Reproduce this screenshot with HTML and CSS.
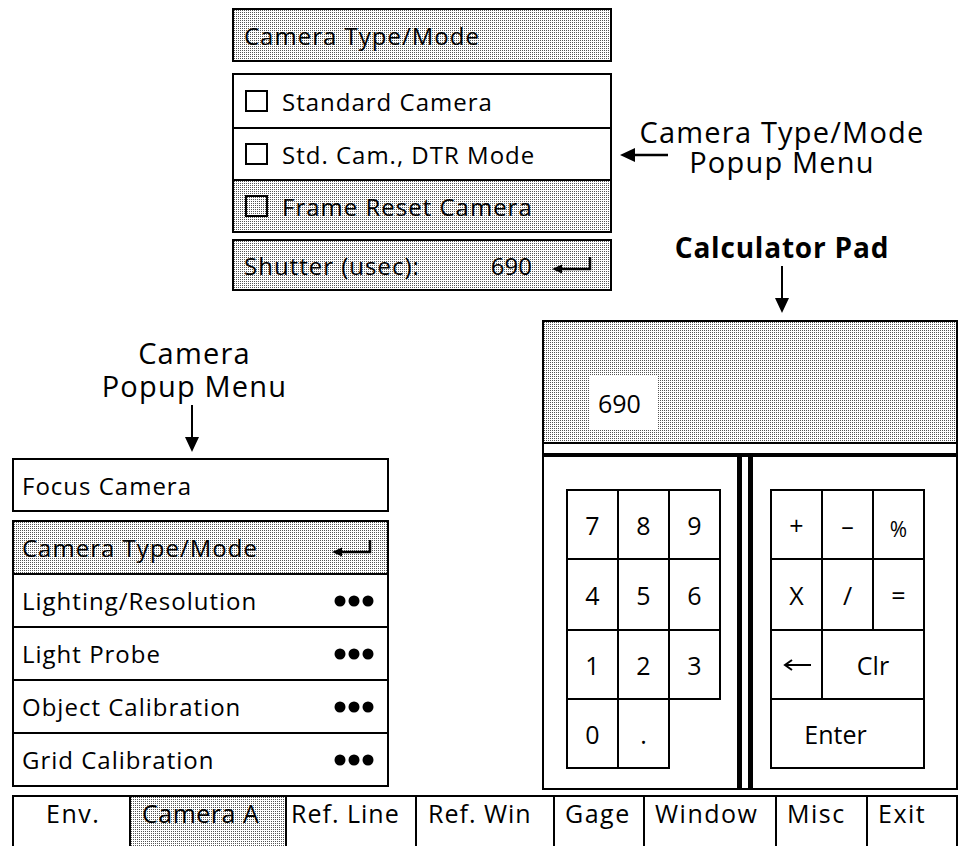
FILE: index.html
```html
<!DOCTYPE html>
<html lang="en">
<head>
    <meta charset="UTF-8">
    <title>Camera Popup Menus and Calculator Pad</title>
    <link rel="stylesheet" href="styles.css">
</head>
<body>
<div class="screen">
    <div class="top">
        <div class="type-popup">
            <div class="box shade title">Camera Type/Mode</div>
            <div class="box list">
                <div class="row check-row"><span class="check"></span>Standard Camera</div>
                <div class="row check-row"><span class="check"></span>Std. Cam., DTR Mode</div>
                <div class="row check-row shade"><span class="check shade"></span>Frame Reset Camera</div>
            </div>
            <div class="box shade shutter">
                <span class="name">Shutter (usec):</span>
                <span class="value">690</span>
                <svg class="enter-mark" width="42" height="18" viewBox="0 0 42 18"><polygon points="0,13 10,8.5 10,17.5"/><path d="M8 13 H38 V1" fill="none" stroke="#000" stroke-width="2.5"/></svg>
            </div>
        </div>
        <div class="callouts">
            <div class="type-callout">
                <svg class="arrow-left" width="48" height="16" viewBox="0 0 48 16"><line x1="12" y1="8" x2="48" y2="8" stroke="#000" stroke-width="2.5"/><polygon points="0,8 15,1 15,15"/></svg>
                <div class="label">
                    <div class="line">Camera Type/Mode</div>
                    <div class="line">Popup Menu</div>
                </div>
            </div>
            <div class="calc-callout">
                <div class="label bold"><div class="line">Calculator Pad</div></div>
                <svg class="arrow-down" width="16" height="47" viewBox="0 0 16 47"><line x1="8" y1="0" x2="8" y2="34" stroke="#000" stroke-width="2"/><polygon points="1,32 15,32 8,47"/></svg>
            </div>
        </div>
    </div>

    <div class="middle">
        <div class="left">
            <div class="label">
                <div class="line">Camera</div>
                <div class="line">Popup Menu</div>
            </div>
            <svg class="arrow-down camera-arrow" width="16" height="47" viewBox="0 0 16 47"><line x1="8" y1="0" x2="8" y2="34" stroke="#000" stroke-width="2"/><polygon points="1,32 15,32 8,47"/></svg>
            <div class="box row focus">Focus Camera</div>
            <div class="box list menu">
                <div class="row shade">Camera Type/Mode
                    <svg width="42" height="18" viewBox="0 0 42 18"><polygon points="0,13 10,8.5 10,17.5"/><path d="M8 13 H38 V1" fill="none" stroke="#000" stroke-width="2.5"/></svg>
                </div>
                <div class="row">Lighting/Resolution
                    <svg width="40" height="12" viewBox="0 0 40 12"><circle cx="6" cy="6" r="5.5"/><circle cx="20" cy="6" r="5.5"/><circle cx="34" cy="6" r="5.5"/></svg>
                </div>
                <div class="row">Light Probe
                    <svg width="40" height="12" viewBox="0 0 40 12"><circle cx="6" cy="6" r="5.5"/><circle cx="20" cy="6" r="5.5"/><circle cx="34" cy="6" r="5.5"/></svg>
                </div>
                <div class="row">Object Calibration
                    <svg width="40" height="12" viewBox="0 0 40 12"><circle cx="6" cy="6" r="5.5"/><circle cx="20" cy="6" r="5.5"/><circle cx="34" cy="6" r="5.5"/></svg>
                </div>
                <div class="row">Grid Calibration
                    <svg width="40" height="12" viewBox="0 0 40 12"><circle cx="6" cy="6" r="5.5"/><circle cx="20" cy="6" r="5.5"/><circle cx="34" cy="6" r="5.5"/></svg>
                </div>
            </div>
        </div>

        <div class="box calc">
            <div class="display shade">
                <div class="readout">690</div>
            </div>
            <div class="keys">
                <div class="pad pad-left">
                    <div class="keypad">
                        <div class="key">7</div>
                        <div class="key">8</div>
                        <div class="key">9</div>
                        <div class="key">4</div>
                        <div class="key">5</div>
                        <div class="key">6</div>
                        <div class="key">1</div>
                        <div class="key">2</div>
                        <div class="key">3</div>
                        <div class="key">0</div>
                        <div class="key">.</div>
                    </div>
                </div>
                <div class="pad pad-right">
                    <div class="keypad">
                        <div class="key">+</div>
                        <div class="key">–</div>
                        <div class="key percent">%</div>
                        <div class="key">X</div>
                        <div class="key">/</div>
                        <div class="key">=</div>
                        <div class="key"><svg width="28" height="12" viewBox="0 0 28 12"><line x1="3" y1="6" x2="28" y2="6" stroke="#000" stroke-width="2"/><polyline points="9,1 2,6 9,11" fill="none" stroke="#000" stroke-width="2"/></svg></div>
                        <div class="key span2">Clr</div>
                        <div class="key span3 enter">Enter</div>
                    </div>
                </div>
            </div>
        </div>
    </div>

    <div class="tabs">
        <div class="tab env">Env.</div>
        <div class="tab shade camera-a">Camera A</div>
        <div class="tab ref-line">Ref. Line</div>
        <div class="tab ref-win">Ref. Win</div>
        <div class="tab gage">Gage</div>
        <div class="tab window">Window</div>
        <div class="tab misc">Misc</div>
        <div class="tab exit">Exit</div>
    </div>
</div>
</body>
</html>
```

FILE: styles.css
```css
body {
    margin: 0;
    background-color: #fff;
    color: #000;
    font-family: "Open Sans", "DejaVu Sans", sans-serif;
}
.screen {
    width: 962px;
    height: 846px;
    overflow: hidden;
}
.shade {
    background-color: #fff;
    background-image: conic-gradient(at 1px 1px, transparent 75%, #555 0);
    background-size: 2px 2px;
}
.box {
    border: 2px solid #000;
    box-sizing: border-box;
}
.row {
    display: flex;
    align-items: center;
    height: 52px;
    padding: 0 10px;
    font-size: 24px;
    letter-spacing: 1px;
    box-sizing: border-box;
}
.list .row + .row {
    border-top: 2px solid #000;
}

/* top area */
.top {
    display: flex;
    height: 320px;
}
.type-popup {
    display: flex;
    flex-direction: column;
    width: 380px;
    margin: 8px 0 0 232px;
}
.title {
    height: 54px;
    display: flex;
    align-items: center;
    padding-left: 10px;
    font-size: 24px;
    letter-spacing: 1px;
}
.type-popup .list {
    margin-top: 11px;
}
.check-row {
    padding-left: 11px;
}
.check {
    width: 23px;
    height: 22px;
    border: 2px solid #000;
    box-sizing: border-box;
    margin-right: 14px;
    flex: none;
}
.shutter {
    display: flex;
    align-items: center;
    height: 52px;
    margin-top: 6px;
    padding: 0 16px 0 10px;
    font-size: 24px;
}
.shutter .name {
    letter-spacing: 1px;
}
.shutter .value {
    margin-left: auto;
}
.shutter .enter-mark {
    margin-left: 20px;
}

.callouts {
    flex: 1;
    display: flex;
    flex-direction: column;
}
.label {
    font-size: 29px;
    letter-spacing: 1.2px;
    text-align: center;
}
.label .line {
    height: 30px;
    line-height: 30px;
    white-space: nowrap;
}
.label.bold {
    font-weight: 700;
    font-size: 28px;
    letter-spacing: 0.8px;
}
.type-callout {
    display: flex;
    align-items: flex-start;
    margin: 117px 0 0 8px;
}
.arrow-left {
    flex: none;
    margin-top: 30px;
}
.type-callout .label {
    width: 300px;
    margin-left: -36px;
}
.calc-callout {
    display: flex;
    flex-direction: column;
    align-items: center;
    margin-top: 55px;
    padding-right: 10px;
}
.arrow-down {
    display: block;
    margin-top: 4px;
}

/* middle area */
.middle {
    display: flex;
    height: 475px;
}
.left {
    display: flex;
    flex-direction: column;
    width: 377px;
    margin-left: 12px;
}
.left .label {
    margin-top: 18px;
    padding-right: 12px;
}
.left .label .line {
    height: 33px;
}
.left .label .line + .line {
    height: 31px;
}
.camera-arrow {
    margin: 3px 0 0 172px;
}
.focus {
    height: 54px;
    margin-top: 6px;
    padding-left: 8px;
}
.menu {
    margin-top: 8px;
}
.menu .row {
    height: 51px;
    justify-content: space-between;
    padding: 0 13px 0 8px;
}
.menu .row + .row {
    height: 53px;
}

.calc {
    display: flex;
    flex-direction: column;
    width: 416px;
    height: 470px;
    margin-left: 153px;
}
.display {
    height: 122px;
    border-bottom: 2px solid #000;
    display: flex;
    align-items: flex-start;
    box-sizing: border-box;
}
.readout {
    display: flex;
    align-items: center;
    width: 67px;
    height: 55px;
    margin: 53px 0 0 46px;
    padding-left: 8px;
    box-sizing: border-box;
    background-color: #fff;
    font-size: 25px;
}
.keys {
    flex: 1;
    display: flex;
    margin-top: 9px;
    border-top: 4px solid #000;
}
.pad {
    box-sizing: border-box;
}
.pad-left {
    width: 198px;
    border-right: 5px solid #000;
    padding: 33px 0 0 23px;
}
.pad-right {
    flex: 1;
    margin-left: 6px;
    border-left: 5px solid #000;
    padding: 33px 0 0 18px;
}
.keypad {
    display: grid;
    grid-template-columns: repeat(3, 51px);
    grid-template-rows: 69px 71px 69px 69px;
}
.key {
    display: flex;
    align-items: center;
    justify-content: center;
    margin: -1px;
    border: 2px solid #000;
    font-size: 25px;
}
.key.percent {
    font-size: 21px;
    padding-top: 8px;
}
.span2 {
    grid-column: span 2;
}
.span3 {
    grid-column: span 3;
}
.enter {
    padding-right: 24px;
}

/* tab bar */
.tabs {
    display: flex;
    height: 60px;
    margin-left: 12px;
    width: 946px;
    border-top: 2px solid #000;
}
.tab {
    box-sizing: border-box;
    border-left: 2px solid #000;
    padding: 1px 0 0 10px;
    font-size: 25px;
    line-height: 30px;
    letter-spacing: 1.5px;
    white-space: nowrap;
}
.env { width: 117px; padding-left: 32px; }
.camera-a { width: 156px; padding-left: 11px; letter-spacing: 0.5px; }
.ref-line { width: 130px; padding-left: 4px; letter-spacing: 1px; }
.ref-win { width: 138px; padding-left: 11px; letter-spacing: 1px; }
.gage { width: 90px; }
.window { width: 132px; }
.misc { width: 91px; }
.exit { width: 92px; border-right: 2px solid #000; }
```
